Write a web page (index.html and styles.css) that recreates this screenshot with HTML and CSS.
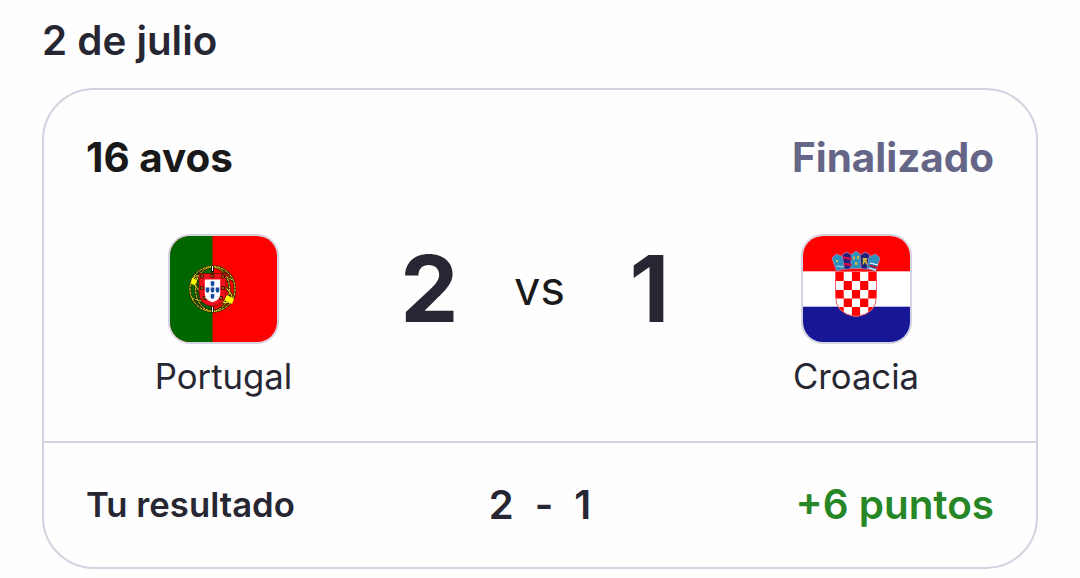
FILE: index.html
```
<!DOCTYPE html>
<html lang="es">
<head>
    <meta charset="UTF-8">
    <meta name="viewport" content="width=device-width, initial-scale=1.0">
    <title>Resultados</title>
    <link rel="stylesheet" href="styles.css">
</head>
<body>
    <h2 class="match-date">2 de julio</h2>

    <div class="match-card">
        <div class="match-main">
            <div class="match-header">
                <span class="stage">16 avos</span>
                <span class="status">Finalizado</span>
            </div>
            <div class="match-body">
                <div class="team">
                    <svg class="flag" viewBox="0 0 107 106" preserveAspectRatio="none">
                        <rect width="107" height="106" fill="#f00"/>
                        <rect width="42.5" height="106" fill="#060"/>
                        <!-- Esfera armilar -->
                        <g fill="none" stroke="#302b00" stroke-width="2.5">
                            <circle cx="42.5" cy="53" r="22.500"/>
                            <ellipse cx="42.5" cy="53" rx="22" ry="9" transform="rotate(30 42.5 53)"/>
                            <ellipse cx="42.5" cy="53" rx="17" ry="22"/>
                            <path d="M42.5 30v46M22 44q20-9 41 0M22 62q20 9 41 0"/>
                        </g>
                        <g fill="none" stroke="#e8e020" stroke-width="1">
                            <circle cx="42.5" cy="53" r="22.500" stroke-dasharray="3 .8"/>
                            <ellipse cx="42.5" cy="53" rx="22" ry="9" transform="rotate(30 42.5 53)"/>
                            <ellipse cx="42.5" cy="53" rx="17" ry="22" stroke-dasharray="2.500 1"/>
                            <path d="M22 44q20-9 41 0M22 62q20 9 41 0" stroke-dasharray="2.500 1"/>
                        </g>
                        <path d="M22 42l5 2-2 5-4-1zM57 59l7 4-2 5-8-4z" fill="#ff0"/>
                        <path d="M42.5 30v6M42.5 70v6" stroke="#000" stroke-width="2.4"/>
                        <path d="M42.5 30v5M42.5 71v5" stroke="#fff" stroke-width="1"/>
                        <path d="M29 37.500h27v19q0 12-13.500 14Q29 68.500 29 56.500z" fill="#f0101c" stroke="#651000" stroke-width=".8"/>
                        <g fill="#a05a00" stroke="#4b0a00" stroke-width=".9">
                            <path d="M30.500 39h3v3h-3zM41 38.500h3v3h-3zM51.500 39h3v3h-3zM30.500 50.500h3v3h-3zM51.500 50.500h3v3h-3zM33 60.500h3v3h-3zM49.500 60.500h3v3h-3z"/>
                        </g>
                        <path d="M34.800 43.500h15.400v14q0 7-7.700 8.800-7.700-1.800-7.700-8.800z" fill="#fff"/>
                        <g fill="#174ba0">
                            <path id="quina" d="M40.700 45.300h3.600v3.200q0 1.500-1.800 2-1.800-.5-1.800-2z"/>
                            <use href="#quina" y="6.300"/>
                            <use href="#quina" y="12.600"/>
                            <use href="#quina" x="-5" y="6.300"/>
                            <use href="#quina" x="5" y="6.300"/>
                        </g>
                    </svg>
                    <span class="team-name">Portugal</span>
                </div>

                <div class="score">
                    <span class="goals">2</span>
                    <span class="versus">vs</span>
                    <span class="goals">1</span>
                </div>

                <div class="team">
                    <svg class="flag" viewBox="0 0 107 106" preserveAspectRatio="none">
                        <rect width="107" height="106" fill="#fff"/>
                        <rect width="107" height="35.300" fill="#f00"/>
                        <rect y="70.700" width="107" height="35.300" fill="#171796"/>
                        <clipPath id="shield"><path d="M32.500 35.500h41V60q0 18-20.500 20.500Q32.500 78 32.500 60z"/></clipPath>
                        <g clip-path="url(#shield)">
                            <rect x="32" y="35" width="42" height="46" fill="#fff"/>
                            <path fill="#f00" d="M32.500 36h8.200v9h-8.200zM48.900 36h8.200v9h-8.200zM65.300 36h8.200v9h-8.200zM40.700 45h8.200v9h-8.200zM57.100 45h8.200v9h-8.200zM32.500 54h8.200v8.500h-8.200zM48.900 54h8.200v8.500h-8.200zM65.300 54h8.200v8.500h-8.200zM40.700 62.500h8.200v8.500h-8.200zM57.100 62.500h8.200v8.500h-8.200zM32.500 71h8.200v10h-8.200zM48.900 71h8.200v10h-8.200zM65.300 71h8.200v10h-8.200z"/>
                        </g>
                        <path d="M32.500 35.500h41V60q0 18-20.500 20.500Q32.500 78 32.500 60z" fill="none" stroke="#f55b65" stroke-width="1"/>
                        <!-- Corona de cinco escudos -->
                        <g stroke="#a78fb5" stroke-width=".8">
                            <path d="M29 22l4.500-4 6.500 3 2 11.500-8.500 2.500z" fill="#2a90bd"/>
                            <path d="M39 19l4.500-2.800 5.500 2.800v13.500l-7.500 1z" fill="#20207e"/>
                            <path d="M48.500 18.500l4.500-3.500 4.500 3.500 1 14H47.500z" fill="#2a90bd"/>
                            <path d="M57 19l5.500-2.800L67 19l-2.500 14.500-6.500-1z" fill="#20207e"/>
                            <path d="M66 21l6.500-3 4.500 4-4.500 13-8.500-2.500z" fill="#2a90bd"/>
                        </g>
                        <path d="M40 21.500l8.500 1.500M41 28l7.500 1" stroke="#d00b4b" stroke-width="2.400"/>
                        <path d="M67 27l8 2M66 32l7 2" stroke="#fff" stroke-width="1"/>
                        <path d="M66.500 29.500l7.500 2" stroke="#b5123c" stroke-width="2"/>
                        <path d="M50 20.500h2v3h-2zM54 20h2v3h-2zM52 26h2.500v3H52zM59.500 22h5l-1 2.500 1 4h-1.500l-1-2.500-1.500 2.500h-1l.5-4z" fill="#cdb83a"/>
                        <path d="M33 24h2v2h-2z" fill="#d8d052"/>
                        <path d="M33.500 30.500q2-1.500 3.500 0t3.500-.5" fill="none" stroke="#cceaf5"/>
                    </svg>
                    <span class="team-name">Croacia</span>
                </div>
            </div>
        </div>

        <div class="match-footer">
            <span class="footer-label">Tu resultado</span>
            <div class="prediction">
                <span>2</span>
                <span>-</span>
                <span>1</span>
            </div>
            <span class="points">+6 puntos</span>
        </div>
    </div>
</body>
</html>
```
FILE: styles.css
```
* {
    box-sizing: border-box;
}
body {
    font-family: 'Inter', sans-serif;
    background-color: #fefefe;
    color: #272733;
    margin: 0;
    padding: 16px 42px 0;
}
.match-date {
    font-size: 40.3px;
    font-weight: 600;
    line-height: 50px;
    margin: 0 0 22px;
}

/* Tarjeta del partido */
.match-card {
    height: 481px;
    border: 2px solid #d2d3e0;
    border-radius: 52px;
}
.match-main {
    height: 353px;
    padding: 43px 42px 0;
    border-bottom: 2px solid #d2d3e0;
}
.match-header {
    display: flex;
    justify-content: space-between;
    font-size: 40.4px;
    font-weight: 700;
    line-height: 50px;
}
.stage {
    color: #191919;
}
.status {
    color: #656587;
}
.match-body {
    display: grid;
    grid-template-columns: 275px 1fr 276px;
    margin-top: 51px;
}
.team {
    display: flex;
    flex-direction: column;
    align-items: center;
}
.flag {
    width: 111px;
    height: 110px;
    border: 2px solid #d2d3e0;
    border-radius: 22px;
}
.team-name {
    font-size: 34.7px;
    line-height: 44px;
    margin-top: 10px;
}

/* Marcador */
.score {
    display: grid;
    grid-template-columns: repeat(3, 110px);
    justify-content: center;
    align-items: center;
    height: 108px;
    line-height: 1;
    text-align: center;
}
.goals {
    font-size: 92.5px;
    font-weight: 700;
}
.versus {
    font-size: 47px;
    color: #191919;
    padding-bottom: 2px;
}

/* Resultado del usuario */
.match-footer {
    display: grid;
    grid-template-columns: 1fr auto 1fr;
    align-items: center;
    height: 122px;
    padding: 0 42px;
    font-weight: 600;
}
.footer-label {
    font-size: 34.7px;
}
.prediction {
    display: flex;
    gap: 21px;
    font-size: 40px;
}
.points {
    font-size: 40.4px;
    color: #278727;
    text-align: right;
}
```
